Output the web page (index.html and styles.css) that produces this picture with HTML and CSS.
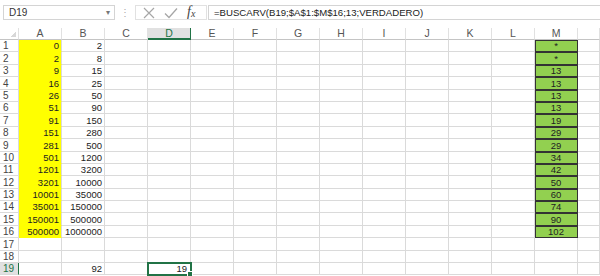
FILE: index.html
```html
<html>
    <head>
        <link rel="stylesheet" href="styles.css">
    </head>
    <body>
        <div id="formulabar">
            <div class="namebox">
                <span>D19</span>
                <span class="arrow">&#9662;</span>
            </div>
            <span class="grip">&#8942;</span>
            <div class="tools">
                <svg width="12" height="12" viewBox="0 0 12 12"><path d="M1 1 L11 11 M11 1 L1 11" stroke="#a6a6a6" stroke-width="1.2" fill="none"/></svg>
                <svg width="14" height="12" viewBox="0 0 14 12"><path d="M1 6.5 L5 10.5 L13 1.5" stroke="#a6a6a6" stroke-width="1.3" fill="none"/></svg>
                <span class="fx">f<sub>x</sub></span>
            </div>
            <div class="formula">=BUSCARV(B19;$A$1:$M$16;13;VERDADERO)</div>
        </div>

        <table class="sheet">
            <colgroup>
                <col class="rh"><col class="c"><col class="c"><col class="c"><col class="c"><col class="c"><col class="c"><col class="c"><col class="c"><col class="c"><col class="c"><col class="c"><col class="c"><col class="c"><col class="rest">
            </colgroup>
            <tr class="head">
                <th class="corner"></th><th>A</th><th>B</th><th>C</th><th class="active">D</th><th>E</th><th>F</th><th>G</th><th>H</th><th>I</th><th>J</th><th>K</th><th>L</th><th>M</th><th></th>
            </tr>
            <tr><th>1</th><td class="y">0</td><td>2</td><td></td><td></td><td></td><td></td><td></td><td></td><td></td><td></td><td></td><td></td><td class="g">*</td><td></td></tr>
            <tr class="t"><th>2</th><td class="y">2</td><td>8</td><td></td><td></td><td></td><td></td><td></td><td></td><td></td><td></td><td></td><td></td><td class="g">*</td><td></td></tr>
            <tr><th>3</th><td class="y">9</td><td>15</td><td></td><td></td><td></td><td></td><td></td><td></td><td></td><td></td><td></td><td></td><td class="g">13</td><td></td></tr>
            <tr class="t"><th>4</th><td class="y">16</td><td>25</td><td></td><td></td><td></td><td></td><td></td><td></td><td></td><td></td><td></td><td></td><td class="g">13</td><td></td></tr>
            <tr><th>5</th><td class="y">26</td><td>50</td><td></td><td></td><td></td><td></td><td></td><td></td><td></td><td></td><td></td><td></td><td class="g">13</td><td></td></tr>
            <tr><th>6</th><td class="y">51</td><td>90</td><td></td><td></td><td></td><td></td><td></td><td></td><td></td><td></td><td></td><td></td><td class="g">13</td><td></td></tr>
            <tr class="t"><th>7</th><td class="y">91</td><td>150</td><td></td><td></td><td></td><td></td><td></td><td></td><td></td><td></td><td></td><td></td><td class="g">19</td><td></td></tr>
            <tr><th>8</th><td class="y">151</td><td>280</td><td></td><td></td><td></td><td></td><td></td><td></td><td></td><td></td><td></td><td></td><td class="g">29</td><td></td></tr>
            <tr class="t"><th>9</th><td class="y">281</td><td>500</td><td></td><td></td><td></td><td></td><td></td><td></td><td></td><td></td><td></td><td></td><td class="g">29</td><td></td></tr>
            <tr><th>10</th><td class="y">501</td><td>1200</td><td></td><td></td><td></td><td></td><td></td><td></td><td></td><td></td><td></td><td></td><td class="g">34</td><td></td></tr>
            <tr><th>11</th><td class="y">1201</td><td>3200</td><td></td><td></td><td></td><td></td><td></td><td></td><td></td><td></td><td></td><td></td><td class="g">42</td><td></td></tr>
            <tr class="t"><th>12</th><td class="y">3201</td><td>10000</td><td></td><td></td><td></td><td></td><td></td><td></td><td></td><td></td><td></td><td></td><td class="g">50</td><td></td></tr>
            <tr><th>13</th><td class="y">10001</td><td>35000</td><td></td><td></td><td></td><td></td><td></td><td></td><td></td><td></td><td></td><td></td><td class="g">60</td><td></td></tr>
            <tr><th>14</th><td class="y">35001</td><td>150000</td><td></td><td></td><td></td><td></td><td></td><td></td><td></td><td></td><td></td><td></td><td class="g">74</td><td></td></tr>
            <tr class="t"><th>15</th><td class="y">150001</td><td>500000</td><td></td><td></td><td></td><td></td><td></td><td></td><td></td><td></td><td></td><td></td><td class="g">90</td><td></td></tr>
            <tr><th>16</th><td class="y">500000</td><td>1000000</td><td></td><td></td><td></td><td></td><td></td><td></td><td></td><td></td><td></td><td></td><td class="g">102</td><td></td></tr>
            <tr class="t"><th>17</th><td></td><td></td><td></td><td></td><td></td><td></td><td></td><td></td><td></td><td></td><td></td><td></td><td></td><td></td></tr>
            <tr><th>18</th><td></td><td></td><td></td><td></td><td></td><td></td><td></td><td></td><td></td><td></td><td></td><td></td><td></td><td></td></tr>
            <tr><th class="active">19</th><td></td><td>92</td><td></td><td class="sel">19</td><td></td><td></td><td></td><td></td><td></td><td></td><td></td><td></td><td></td><td></td></tr>
        </table>
    </body>
</html>
```

FILE: styles.css
```css
body{
    margin: 0;
    width: 600px;
    height: 276px;
    overflow: hidden;
    background: #fff;
    font-family: 'Liberation Sans', Arial, sans-serif;
    color: #222;
}
#formulabar{
    display: flex;
    align-items: center;
    height: 28px;
    padding-left: 3px;
    box-sizing: border-box;
    padding-bottom: 3px;
}
.namebox{
    display: flex;
    align-items: center;
    justify-content: space-between;
    width: 112px;
    height: 15px;
    box-sizing: border-box;
    border: 1px solid #d4d4d4;
    padding: 0 4px 0 5px;
    font-size: 10px;
    color: #333;
}
.arrow{
    font-size: 8px;
    color: #777;
}
.grip{
    width: 20px;
    text-align: center;
    font-size: 10px;
    color: #aaa;
}
.tools{
    display: flex;
    align-items: center;
    width: 72px;
    height: 15px;
    box-sizing: border-box;
    border: 1px solid #e1e1e1;
    padding-left: 7px;
    gap: 9px;
}
.fx{
    font-family: 'Liberation Serif', serif;
    font-style: italic;
    font-size: 14px;
    color: #444;
    line-height: 10px;
}
.fx sub{
    font-size: 10px;
    vertical-align: -1px;
}
.formula{
    flex: 1;
    height: 15px;
    box-sizing: border-box;
    border: 1px solid #d4d4d4;
    border-right: none;
    margin-left: 1px;
    padding-left: 5px;
    font-size: 9.6px;
    line-height: 13px;
    color: #222;
}
.sheet{
    border-collapse: separate;
    border-spacing: 0;
    table-layout: fixed;
    width: 600px;
    font-size: 9.5px;
}
col.rh{ width: 19px; }
col.c{ width: 43px; }
col.rest{ width: 22px; }
.sheet th, .sheet td{
    padding: 0 2px 0 0;
    height: 12px;
    line-height: 11px;
    border-right: 1px solid #dadada;
    border-bottom: 1px solid #dadada;
    white-space: nowrap;
    overflow: visible;
    text-align: right;
}
.sheet tr.t th, .sheet tr.t td{
    height: 13px;
}
.sheet th{
    font-weight: normal;
    color: #444;
    text-align: left;
    padding-left: 3px;
    font-size: 10px;
}
.head th{
    height: 11px;
    text-align: center;
    padding: 0;
    font-size: 10.5px;
    color: #555;
    border-bottom-color: #c4c4c4;
    border-right-color: #e1e1e1;
}
.head th.corner{
    background: linear-gradient(135deg, transparent 65%, #d8d8d8 65%) no-repeat right 2px bottom 2px / 8px 8px;
}
.head th.active{
    background: #e1e1e1;
    border-bottom: 1px solid #217346;
    box-shadow: inset 0 -1px 0 #217346;
    color: #217346;
}
th.active{
    background: #e1e1e1;
    color: #217346;
    border-right-color: #217346;
}
td.y{
    background: #ffff00;
    border-bottom-color: #ffff00;
}
td.g{
    background: #92d050;
    text-align: center;
    padding: 0;
    border-right-color: #333;
    border-bottom-color: #333;
    box-shadow: inset 1px 1px 0 #333;
}
td.sel{
    position: relative;
    outline: 2px solid #217346;
    outline-offset: -1px;
    padding-right: 3px;
}
td.sel::after{
    content: "";
    position: absolute;
    right: -3px;
    bottom: -3px;
    width: 4px;
    height: 4px;
    background: #217346;
    border: 1px solid #fff;
}
```
